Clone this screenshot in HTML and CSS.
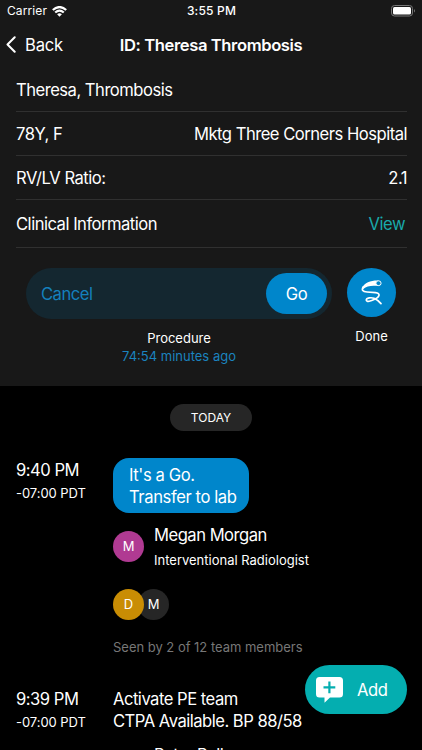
FILE: index.html
```html
<!DOCTYPE html>
<html lang="en">
<head>
<meta charset="utf-8">
<title>ID: Theresa Thrombosis</title>
<link rel="stylesheet" href="styles.css">
</head>
<body>
<div class="app">
  <section class="patient">
    <div class="status">
      <div class="carrier"><span>Carrier</span>
        <svg class="wifi" width="15" height="11" viewBox="0 0 15 11"><g fill="none" stroke="#fff" stroke-width="2.2"><path d="M.8 4Q7.5-1.9 14.2 4"/><path d="M3.2 6.5Q7.5 2.7 11.8 6.5"/></g><path d="M5.1 8.3Q7.5 6.2 9.9 8.3L7.5 10.8Z" fill="#fff"/></svg>
      </div>
      <span class="clock">3:55 PM</span>
      <svg class="battery" width="25" height="12" viewBox="0 0 25 12"><rect x=".5" y=".5" width="21" height="10.5" rx="3" fill="none" stroke="#777"/><rect x="2" y="2" width="18" height="7.5" rx="1.5" fill="#fff"/><path d="M23 4Q25 5.8 23 7.5Z" fill="#777"/></svg>
    </div>
    <header class="nav">
      <a class="back"><svg width="10" height="17" viewBox="0 0 10 17"><path d="M8.7 1.2L1.5 8.5L8.7 15.8" fill="none" stroke="#fff" stroke-width="2" stroke-linecap="round" stroke-linejoin="round"/></svg><span>Back</span></a>
      <h1>ID: Theresa Thrombosis</h1>
    </header>
    <div class="info">
      <div class="row"><span>Theresa, Thrombosis</span></div>
      <div class="row"><span>78Y, F</span><span>Mktg Three Corners Hospital</span></div>
      <div class="row"><span>RV/LV Ratio:</span><span>2.1</span></div>
      <div class="row tall"><span>Clinical Information</span><span class="view">View</span></div>
    </div>
    <div class="actions">
      <div class="decision">
        <div class="slider"><span class="cancel">Cancel</span><span class="go">Go</span></div>
        <div class="procedure">Procedure</div>
        <div class="elapsed">74:54 minutes ago</div>
      </div>
      <div class="done">
        <div class="done-button"><svg width="22" height="25" viewBox="0 0 22 25"><path d="M2.2 7C.4 10 1.6 11.6 6 12L14.5 12.6C20 13.2 18.6 17.2 13.6 19.3C10 21.2 5.6 22.4 5.3 20.1C5.3 17.7 10.5 17.3 13 18.3C16 19.6 18.2 21.6 20 23.6" fill="none" stroke="#fff" stroke-width="1.7" stroke-linecap="round"/><path d="M17.5 .4C10 .1 3.6 2.6 1.2 7.6C.8 8.7 1.6 9.5 2.6 8.7C5.6 5.8 10.5 5.2 17.5 5.9Z" fill="#fff"/><ellipse cx="17.5" cy="3.2" rx="2.6" ry="2.4" fill="#0086cb" stroke="#fff"/></svg></div>
        <span>Done</span>
      </div>
    </div>
  </section>
  <main class="timeline">
    <div class="today">TODAY</div>
    <article class="event">
      <div class="when"><div class="time">9:40 PM</div><div class="zone">-07:00 PDT</div></div>
      <div class="what">
        <div class="bubble"><div>It's a Go.</div><div>Transfer to lab</div></div>
        <div class="person"><span class="avatar pink">M</span><div><div class="who">Megan Morgan</div><div class="role">Interventional Radiologist</div></div></div>
        <div class="viewers"><span class="avatar gold">D</span><span class="avatar gray">M</span></div>
        <div class="seen">Seen by 2 of 12 team members</div>
      </div>
    </article>
    <article class="event second">
      <div class="when"><div class="time">9:39 PM</div><div class="zone">-07:00 PDT</div></div>
      <div class="what">
        <div class="activate">Activate PE team</div><div class="ctpa">CTPA Available. BP 88/58</div>
        <div class="peter">Peter Pella</div>
      </div>
    </article>
  </main>
  <button class="add"><svg width="27" height="26" viewBox="0 0 27 26"><path d="M3.5 0H23.5Q27 0 27 3.5V17Q27 20.5 23.5 20.5H14L8.5 25.7V20.5H3.5Q0 20.5 0 17V3.5Q0 0 3.5 0Z" fill="#fff"/><path d="M13.4 4.5V16.3M7.5 10.4H19.3" stroke="#04aeb0" stroke-width="2.2"/></svg><span>Add</span></button>
</div>
</body>
</html>
```
FILE: styles.css
```css
* { box-sizing: border-box; }
body { margin: 0; background: #000; }
.app {
  position: relative;
  width: 422px;
  height: 750px;
  overflow: hidden;
  background: #000;
  color: #fff;
  font: 380 16.6px/22px Inter, "Liberation Sans", sans-serif;
  letter-spacing: -0.5px;
  white-space: nowrap;
}
.patient { height: 386px; background: #181818; }
.status { display: grid; grid-template-columns: 1fr auto 1fr; align-items: center; height: 22px; padding: 0 6px 0 7px; font-size: 12px; letter-spacing: 0.1px; }
.carrier { display: flex; align-items: center; gap: 5px; }
.clock { font-weight: 500; letter-spacing: 0.2px; }
.battery { justify-self: end; }
.nav { display: grid; grid-template-columns: 1fr auto 1fr; align-items: center; height: 45px; padding: 0 6px; }
.back { display: flex; align-items: center; gap: 9px; letter-spacing: -0.2px; }
h1 { margin: 0; font-size: 16.6px; line-height: 22px; font-weight: 600; letter-spacing: -0.4px; }
.info { padding: 1px 15px 0 16px; }
.row { display: flex; justify-content: space-between; align-items: center; height: 44px; border-bottom: 1px solid #303030; padding-top: 1px; }
.row.tall { height: 48px; }
.view { color: #18a9aa; margin-right: 2px; }
.actions { display: flex; gap: 15px; padding: 20px 26px 0; }
.decision { width: 306px; text-align: center; }
.slider { display: flex; justify-content: space-between; align-items: center; height: 51px; padding: 0 5px 0 15px; border-radius: 26px; background: #142730; }
.cancel { color: #1580bd; }
.go { width: 61px; height: 41px; border-radius: 21px; background: #0086cb; line-height: 42px; }
.procedure { margin-top: 10px; font-size: 13px; line-height: 18px; letter-spacing: 0; }
.elapsed { color: #1b83bf; font-size: 13px; line-height: 18px; letter-spacing: 0; }
.done { width: 49px; text-align: center; font-size: 13px; line-height: 18px; letter-spacing: 0; }
.done-button { display: flex; align-items: center; justify-content: center; width: 49px; height: 49px; margin-bottom: 10px; border-radius: 50%; background: #0086cb; }
.timeline { padding: 18px 16px 0; }
.today { width: 82px; height: 27px; margin: 0 auto; border-radius: 14px; background: #262626; text-align: center; font-size: 12px; line-height: 27px; letter-spacing: 0; }
.event { display: grid; grid-template-columns: 97px 1fr; margin-top: 27px; }
.when { padding-top: 1px; }
.zone { margin-top: 2px; font-size: 13px; line-height: 20px; letter-spacing: -0.05px; }
.bubble { width: 136px; height: 55px; padding: 6px 0 0 16px; border-radius: 16px; background: #0086cb; letter-spacing: -0.4px; }
.person { display: flex; gap: 10px; margin-top: 11px; }
.avatar { display: block; width: 31px; height: 31px; border-radius: 50%; text-align: center; font-size: 13px; line-height: 31px; letter-spacing: 0; }
.person .avatar { margin-top: 7px; }
.pink { background: #b03a92; }
.gold { position: relative; background: #c98d04; }
.gray { margin-left: -6px; background: #262626; }
.role { margin-top: 4px; font-size: 13px; line-height: 20px; letter-spacing: 0; }
.viewers { display: flex; margin-top: 19px; }
.seen { margin-top: 17px; font-size: 13px; line-height: 20px; color: #777; letter-spacing: -0.02px; }
.event.second { margin-top: 31px; }
.second .when { padding-top: 0; }
.peter { margin: 12px 0 0 41px; }
.add { position: absolute; left: 305px; top: 665px; display: flex; align-items: center; gap: 14px; width: 102px; height: 49px; padding: 0 0 0 11px; border: 0; border-radius: 25px; background: #04aeb0; color: #fff; font: inherit; letter-spacing: -0.4px; }
```
